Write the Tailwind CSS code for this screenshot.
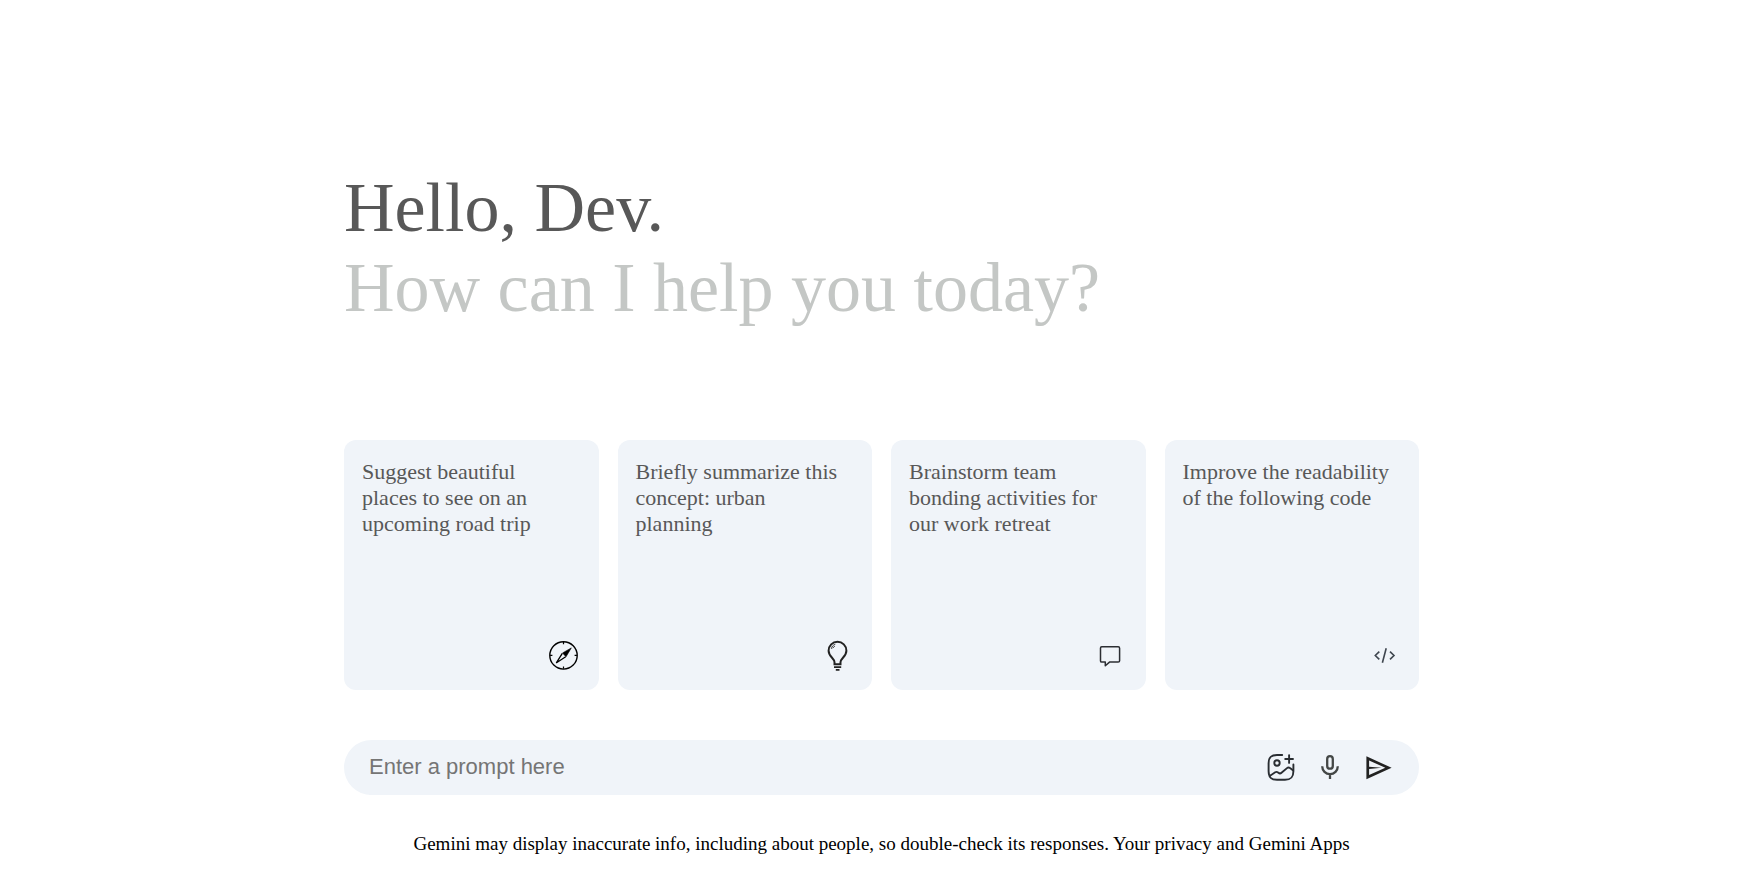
<!DOCTYPE html>
<html lang="en">
<head>
<meta charset="utf-8">
<meta name="viewport" content="width=device-width, initial-scale=1">
<title>Gemini</title>
<script src="https://cdn.jsdelivr.net/npm/@tailwindcss/browser@4"></script>
</head>
<body class="bg-white font-['Liberation_Serif',serif] text-black">
<main class="pl-[18px]">
  <div class="mx-auto max-w-[1075px] pt-[168px]">
    <h1 class="text-[70px] leading-[80px] text-[#585858]">Hello, Dev.</h1>
    <p class="text-[70px] leading-[80px] text-[#c4c7c5]">How can I help you today?</p>

    <div class="mt-28 grid grid-cols-4 gap-[19px] text-[22px] leading-[26px] text-[#585858]">
      <button type="button" class="flex min-h-[250px] cursor-pointer flex-col justify-between rounded-xl bg-[#f0f4f9] px-[18px] pt-[19px] pb-[18px] text-left">
        <span class="pr-2">Suggest beautiful places to see on an upcoming road trip</span>
        <svg class="size-8 self-end" viewBox="0 0 32 32" fill="none" stroke="#000" aria-hidden="true">
          <circle cx="14.500" cy="15.400" r="13.700" stroke-width="1.400"/>
          <path d="M14.500 2v2.300M14.500 26.500v2.300M1.100 15.400h2.300M25.600 15.400h2.300" stroke-width="1.200"/>
          <path d="M22.300 7.900 13.500 13l3.500 3.800Z" fill="#000" stroke-width=".6"/>
          <path d="M13.300 13.300 7.500 22.700l9.200-6" stroke-width="1.300" stroke-linejoin="round"/>
        </svg>
      </button>
      <button type="button" class="flex min-h-[250px] cursor-pointer flex-col justify-between rounded-xl bg-[#f0f4f9] px-[18px] pt-[19px] pb-[18px] text-left">
        <span class="pr-2">Briefly summarize this concept: urban planning</span>
        <svg class="size-8 self-end" viewBox="0 0 32 32" fill="none" stroke="#222" stroke-width="2" aria-hidden="true">
          <path d="M12.500 24.200v-2c0-3.800-5.900-5.600-5.900-11.500a8.900 8.900 0 0 1 17.800 0c0 5.900-5.900 7.700-5.900 11.500v2Z"/>
          <path d="M12 27.100h7.200M13.800 29.800h3.700" stroke-width="1.700"/>
          <path d="M9.300 8.800c.4-2.200 1.800-3.800 4-4.500M10.500 8.300l2.300-2.300" stroke-width=".9"/>
        </svg>
      </button>
      <button type="button" class="flex min-h-[250px] cursor-pointer flex-col justify-between rounded-xl bg-[#f0f4f9] px-[18px] pt-[19px] pb-[18px] text-left">
        <span class="pr-2">Brainstorm team bonding activities for our work retreat</span>
        <svg class="size-8 self-end" viewBox="0 0 32 32" fill="none" stroke="#2c2e33" stroke-width="1.500" stroke-linejoin="round" aria-hidden="true">
          <path d="M5.700 6.800h16.500q1.400 0 1.400 1.400v12.500q0 1.400-1.400 1.400h-8.700l-4.200 3.700v-3.700H5.700q-1.200 0-1.200-1.200V8q0-1.200 1.200-1.200Z"/>
        </svg>
      </button>
      <button type="button" class="flex min-h-[250px] cursor-pointer flex-col justify-between rounded-xl bg-[#f0f4f9] px-[18px] pt-[19px] pb-[18px] text-left">
        <span class="pr-2">Improve the readability of the following code</span>
        <svg class="size-8 self-end" viewBox="0 0 32 32" fill="none" stroke="#3f464f" stroke-width="1.600" aria-hidden="true">
          <path d="m10.300 11.600-4 3.900 4 3.900M21 11.600l4 3.900-4 3.900M17.200 8.300l-3.800 14.400"/>
        </svg>
      </button>
    </div>

    <form class="mt-[50px] flex items-center gap-[21px] rounded-full bg-[#f0f4f9] pt-3 pr-[26px] pb-[13px] pl-[25px]">
      <input type="text" aria-label="Prompt" placeholder="Enter a prompt here" class="h-[30px] min-w-0 flex-1 bg-transparent pb-px font-['Liberation_Sans',sans-serif] text-[22px] outline-none placeholder:text-[#757575]">
      <button type="button" aria-label="Add image" class="cursor-pointer">
        <svg class="size-7" viewBox="0 0 28 28" fill="none" stroke="#292d32" stroke-width="1.900" stroke-linecap="round" stroke-linejoin="round" aria-hidden="true">
          <path d="M15.200 2H10C4 2 1.600 4.300 1.600 10.300v8c0 6.200 2.400 8.500 8.400 8.500h8c6 0 8.400-2.300 8.400-8.500V11.500"/>
          <circle cx="10" cy="10" r="2.700"/>
          <path d="M18.200 6h7.800M22.100 2.100v7.800"/>
          <path d="m3 22.800 5.200-3.500c.9-.6 2-.5 2.800.1l.5.400c.8.700 2.200.7 3 0l5.500-4.700c.8-.7 2.200-.7 3 0l2.900 2.200"/>
        </svg>
      </button>
      <button type="button" aria-label="Use microphone" class="cursor-pointer">
        <svg class="size-7" viewBox="0 0 28 28" fill="none" stroke="#444746" stroke-width="2.300" aria-hidden="true">
          <rect x="11.200" y="3.100" width="5.600" height="12.600" rx="2.800"/>
          <path d="M6.200 13.300a7.800 7.800 0 0 0 15.600 0M14 21.100v5"/>
        </svg>
      </button>
      <button type="submit" aria-label="Send" class="cursor-pointer">
        <svg class="size-7" viewBox="0 0 28 28" aria-hidden="true">
          <path d="M1.400 3.300v23L26.600 14.800ZM4.100 7.500 20.300 14.800 4.100 22.100v-6.200l12.500-1.100-12.500-1.100Z" fill="#222" fill-rule="evenodd"/>
        </svg>
      </button>
    </form>

    <p class="mt-[37px] text-center text-[19px] leading-6">Gemini may display inaccurate info, including about people, so double-check its responses. Your privacy and Gemini Apps</p>
  </div>
</main>
</body>
</html>
